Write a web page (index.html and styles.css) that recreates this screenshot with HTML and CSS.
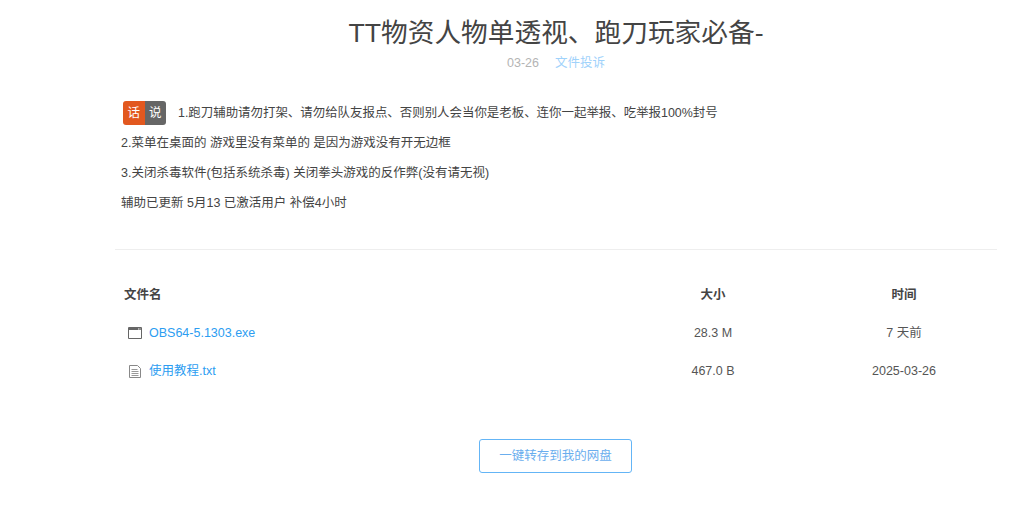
FILE: index.html
```html
<!DOCTYPE html>
<html lang="zh">
<head>
<meta charset="utf-8">
<title>TT物资人物单透视</title>
<link rel="stylesheet" href="styles.css">
</head>
<body>
<main class="page">
  <h1 class="title">TT物资人物单透视、跑刀玩家必备-</h1>
  <div class="meta"><span class="date">03-26</span><a class="report">文件投诉</a></div>
  <section class="notes">
    <p class="note first"><span class="badge"><span class="badge-a">话</span><span class="badge-b">说</span></span><span>1.跑刀辅助请勿打架、请勿给队友报点、否则别人会当你是老板、连你一起举报、吃举报100%封号</span></p>
    <p class="note">2.菜单在桌面的 游戏里没有菜单的 是因为游戏没有开无边框</p>
    <p class="note">3.关闭杀毒软件(包括系统杀毒) 关闭拳头游戏的反作弊(没有请无视)</p>
    <p class="note">辅助已更新 5月13 已激活用户 补偿4小时</p>
  </section>
  <hr class="rule">
  <section class="files">
    <div class="row head"><span class="name">文件名</span><span class="cell">大小</span><span class="cell">时间</span></div>
    <div class="row">
      <span class="name"><svg class="icon" viewBox="0 0 14 14"><path d="M.5 1.5h13v11H.5z" fill="none" stroke="#666"/><path d="M1 2h12v2H1z" fill="#666"/><path d="M10 2.5h1v1h-1zM11.5 2.5h1v1h-1z" fill="#fff"/></svg><a class="link">OBS64-5.1303.exe</a></span>
      <span class="cell">28.3 M</span><span class="cell">7 天前</span>
    </div>
    <div class="row">
      <span class="name"><svg class="icon" viewBox="0 0 14 14"><path d="M1.5 1.5h8l3 3v9h-11z" fill="none" stroke="#888"/><path d="M3.5 5.5h6M3.5 7.5h7M3.5 9.5h7M3.5 11.5h7" stroke="#999" fill="none"/></svg><a class="link">使用教程.txt</a></span>
      <span class="cell">467.0 B</span><span class="cell">2025-03-26</span>
    </div>
  </section>
  <div class="actions"><a class="save">一键转存到我的网盘</a></div>
</main>
</body>
</html>
```
FILE: styles.css
```css
* { box-sizing: border-box; }
html, body { margin: 0; height: 100%; background: #fff; overflow: hidden; }
body { font-family: "Liberation Sans", "Noto Sans CJK SC", sans-serif; color: #444; font-size: 12.5px; }
.page { width: 882px; margin-left: 115px; }
.title { margin: 0; padding-top: 14px; font-size: 26.7px; line-height: 38px; font-weight: 400; text-align: center; color: #444; }
.meta { display: flex; justify-content: center; gap: 16px; margin-top: 1px; line-height: 20px; font-size: 12.5px; }
.date { color: #b4b4b4; }
.report { color: #9fd2fb; }
.notes { padding: 25px 6px 0; }
.note { margin: 0; line-height: 30px; height: 30px; color: #444; display: flex; align-items: center; white-space: pre; }
.first { font-size: 12.44px; }
.badge { display: flex; width: 43px; height: 24px; border-radius: 3px; overflow: hidden; margin: 0 12px 0 2px; color: #fff; line-height: 24px; text-align: center; font-size: 12.5px; }
.badge-a { flex: 1; background: #e2581f; }
.badge-b { flex: 1; background: #666; }
.rule { border: 0; border-top: 1px solid #eee; margin: 31px 0 0; }
.files { padding: 26px 0 0 9px; }
.row { display: grid; grid-template-columns: 520px 138px 244px; height: 38px; line-height: 20px; align-items: center; color: #555; }
.row .name { display: flex; align-items: center; padding-left: 4px; }
.head { font-weight: 700; color: #444; margin-bottom: 0; }
.head .name { padding-left: 0; }
.cell { text-align: center; }
.icon { width: 14px; height: 14px; margin-right: 7px; flex: none; }
.link { color: #2c9df1; }
.actions { display: flex; justify-content: center; margin-top: 49px; padding-right: 1px; }
.save { width: 153px; height: 34px; border: 1px solid #64b5f6; border-radius: 3px; color: #6aaeee; line-height: 32px; text-align: center; font-size: 12.5px; }
```
